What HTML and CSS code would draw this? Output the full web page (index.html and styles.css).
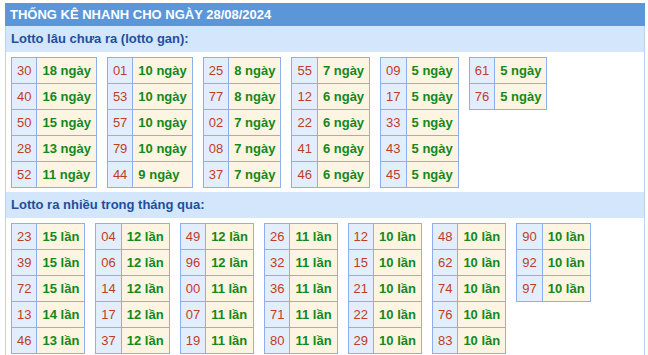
FILE: index.html
```html
<!DOCTYPE html>
<html lang="vi">
<head>
<meta charset="utf-8">
<title>Thống kê nhanh</title>
<link rel="stylesheet" href="styles.css">
</head>
<body>
<div class="box">
  <div class="title">THỐNG KÊ NHANH CHO NGÀY 28/08/2024</div>
  <div class="sub">Lotto lâu chưa ra (lotto gan):</div>
  <div class="group">
    <table class="t"><tr><td class="n">30</td><td class="v">18 ngày</td></tr><tr><td class="n">40</td><td class="v">16 ngày</td></tr><tr><td class="n">50</td><td class="v">15 ngày</td></tr><tr><td class="n">28</td><td class="v">13 ngày</td></tr><tr><td class="n">52</td><td class="v">11 ngày</td></tr></table>
    <table class="t"><tr><td class="n">01</td><td class="v">10 ngày</td></tr><tr><td class="n">53</td><td class="v">10 ngày</td></tr><tr><td class="n">57</td><td class="v">10 ngày</td></tr><tr><td class="n">79</td><td class="v">10 ngày</td></tr><tr><td class="n">44</td><td class="v">9 ngày</td></tr></table>
    <table class="t"><tr><td class="n">25</td><td class="v">8 ngày</td></tr><tr><td class="n">77</td><td class="v">8 ngày</td></tr><tr><td class="n">02</td><td class="v">7 ngày</td></tr><tr><td class="n">08</td><td class="v">7 ngày</td></tr><tr><td class="n">37</td><td class="v">7 ngày</td></tr></table>
    <table class="t"><tr><td class="n">55</td><td class="v">7 ngày</td></tr><tr><td class="n">12</td><td class="v">6 ngày</td></tr><tr><td class="n">22</td><td class="v">6 ngày</td></tr><tr><td class="n">41</td><td class="v">6 ngày</td></tr><tr><td class="n">46</td><td class="v">6 ngày</td></tr></table>
    <table class="t"><tr><td class="n">09</td><td class="v">5 ngày</td></tr><tr><td class="n">17</td><td class="v">5 ngày</td></tr><tr><td class="n">33</td><td class="v">5 ngày</td></tr><tr><td class="n">43</td><td class="v">5 ngày</td></tr><tr><td class="n">45</td><td class="v">5 ngày</td></tr></table>
    <table class="t"><tr><td class="n">61</td><td class="v">5 ngày</td></tr><tr><td class="n">76</td><td class="v">5 ngày</td></tr></table>
  </div>
  <div class="sub">Lotto ra nhiều trong tháng qua:</div>
  <div class="group">
    <table class="t"><tr><td class="n">23</td><td class="v">15 lần</td></tr><tr><td class="n">39</td><td class="v">15 lần</td></tr><tr><td class="n">72</td><td class="v">15 lần</td></tr><tr><td class="n">13</td><td class="v">14 lần</td></tr><tr><td class="n">46</td><td class="v">13 lần</td></tr></table>
    <table class="t"><tr><td class="n">04</td><td class="v">12 lần</td></tr><tr><td class="n">06</td><td class="v">12 lần</td></tr><tr><td class="n">14</td><td class="v">12 lần</td></tr><tr><td class="n">17</td><td class="v">12 lần</td></tr><tr><td class="n">37</td><td class="v">12 lần</td></tr></table>
    <table class="t"><tr><td class="n">49</td><td class="v">12 lần</td></tr><tr><td class="n">96</td><td class="v">12 lần</td></tr><tr><td class="n">00</td><td class="v">11 lần</td></tr><tr><td class="n">07</td><td class="v">11 lần</td></tr><tr><td class="n">19</td><td class="v">11 lần</td></tr></table>
    <table class="t"><tr><td class="n">26</td><td class="v">11 lần</td></tr><tr><td class="n">32</td><td class="v">11 lần</td></tr><tr><td class="n">36</td><td class="v">11 lần</td></tr><tr><td class="n">71</td><td class="v">11 lần</td></tr><tr><td class="n">80</td><td class="v">11 lần</td></tr></table>
    <table class="t"><tr><td class="n">12</td><td class="v">10 lần</td></tr><tr><td class="n">15</td><td class="v">10 lần</td></tr><tr><td class="n">21</td><td class="v">10 lần</td></tr><tr><td class="n">22</td><td class="v">10 lần</td></tr><tr><td class="n">29</td><td class="v">10 lần</td></tr></table>
    <table class="t"><tr><td class="n">48</td><td class="v">10 lần</td></tr><tr><td class="n">62</td><td class="v">10 lần</td></tr><tr><td class="n">74</td><td class="v">10 lần</td></tr><tr><td class="n">76</td><td class="v">10 lần</td></tr><tr><td class="n">83</td><td class="v">10 lần</td></tr></table>
    <table class="t"><tr><td class="n">90</td><td class="v">10 lần</td></tr><tr><td class="n">92</td><td class="v">10 lần</td></tr><tr><td class="n">97</td><td class="v">10 lần</td></tr></table>
  </div>
</div>
</body>
</html>
```

FILE: styles.css
```css
html, body {
  margin: 0;
  padding: 0;
  background: #ffffff;
}
body {
  font-family: "Liberation Sans", Arial, sans-serif;
  font-size: 13px;
}
.box {
  box-sizing: border-box;
  width: 640px;
  margin: 3px 0 0 5px;
  border-left: 1px solid #bcd2ee;
  border-right: 1px solid #bcd2ee;
  border-bottom: 1px solid #bcd2ee;
}
.title {
  height: 23px;
  line-height: 23px;
  margin: 0 -1px;
  padding: 0 5px;
  background: #5b97d8;
  color: #ffffff;
  font-weight: bold;
  font-size: 13px;
}
.sub {
  height: 26px;
  line-height: 26px;
  padding: 0 5px;
  background: #d3e6fb;
  color: #1d4f9f;
  font-weight: bold;
  font-size: 13px;
}
.group {
  display: flex;
  align-items: flex-start;
  gap: 10px;
  padding: 5px 5px 4px 5px;
}
.t {
  border-collapse: collapse;
  border: 1px solid #8cb0ee;
}
.t td {
  border: 1px solid #8cb0ee;
  height: 26px;
  box-sizing: border-box;
  padding: 0;
  line-height: 15px;
  white-space: nowrap;
}
.t .n {
  background: #e2eefc;
  color: #bf3d26;
  padding: 0 5px;
  text-align: center;
}
.t .v {
  background: #fdf4e2;
  color: #14881a;
  font-weight: bold;
  padding: 0 5px;
}
```
